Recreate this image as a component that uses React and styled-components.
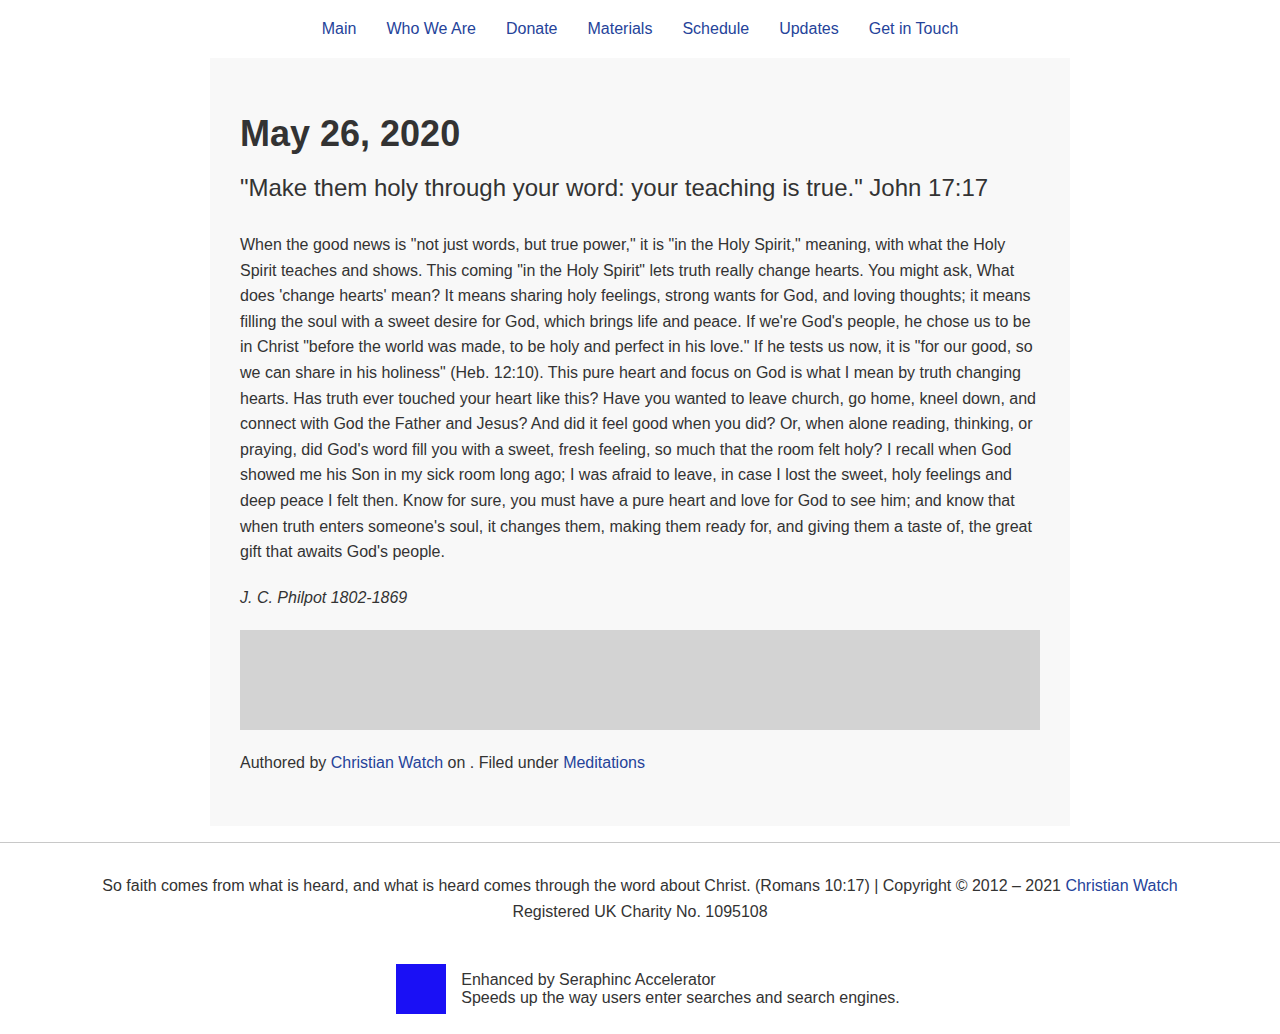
import React from "react"
import styled, { createGlobalStyle } from "styled-components"

const Global = createGlobalStyle`
  body {
    margin: 0;
    background: #fff;
    color: #333;
    font-family: "Liberation Sans", Arial, sans-serif;
    font-size: 16px;
  }
  a {
    color: #25439a;
    text-decoration: none;
  }
`

const Nav = styled.nav`
  display: flex;
  justify-content: center;
  gap: 30px;
  height: 58px;
  align-items: center;
  font-size: 16px;
  a {
    line-height: 20px;
  }
`

const Card = styled.main`
  width: 800px;
  margin: 0 auto;
  padding: 30px;
  background: #f8f8f8;
`

const Title = styled.h1`
  font-size: 36px;
  line-height: 43px;
  font-weight: bold;
  margin: 24px 0 18px;
`

const Verse = styled.h2`
  font-size: 24px;
  line-height: 29px;
  font-weight: normal;
  margin: 0 0 30px;
`

const Para = styled.p`
  line-height: 25.6px;
  margin: 0 0 20px;
  font-style: ${(p) => (p.$italic ? "italic" : "normal")};
`

const Placeholder = styled.div`
  height: 100px;
  background: #d3d3d3;
  margin: 0 0 20px;
`

const Meta = styled.p`
  line-height: 26px;
  margin: 0 0 20px;
`

const Rule = styled.hr`
  border: 0;
  border-top: 1px solid #c8c8c8;
  margin: 16px 0 0;
`

const Footer = styled.footer`
  text-align: center;
  line-height: 26px;
  padding: 30px 0 39px;
`

const Badge = styled.div`
  display: flex;
  justify-content: center;
  align-items: center;
  gap: 15px;
  padding-left: 16px;
`

const Square = styled.div`
  width: 50px;
  height: 50px;
  background: #1a10f5;
`

const BadgeText = styled.div`
  line-height: 18px;
  color: #333;
`

export default function App() {
  return (
    <>
      <Global />
      <Nav>
        <a href="#">Main</a>
        <a href="#">Who We Are</a>
        <a href="#">Donate</a>
        <a href="#">Materials</a>
        <a href="#">Schedule</a>
        <a href="#">Updates</a>
        <a href="#">Get in Touch</a>
      </Nav>
      <Card>
        <Title>May 26, 2020</Title>
        <Verse>"Make them holy through your word: your teaching is true." John 17:17</Verse>
        <Para>
          When the good news is "not just words, but true power," it is "in the Holy Spirit," meaning, with what the Holy Spirit teaches and shows. This coming "in the Holy Spirit" lets truth really change hearts. You might ask, What does 'change hearts' mean? It means sharing holy feelings, strong wants for God, and loving thoughts; it means filling the soul with a sweet desire for God, which brings life and peace. If we're God's people, he chose us to be in Christ "before the world was made, to be holy and perfect in his love." If he tests us now, it is "for our good, so we can share in his holiness" (Heb. 12:10). This pure heart and focus on God is what I mean by truth changing hearts. Has truth ever touched your heart like this? Have you wanted to leave church, go home, kneel down, and connect with God the Father and Jesus? And did it feel good when you did? Or, when alone reading, thinking, or praying, did God's word fill you with a sweet, fresh feeling, so much that the room felt holy? I recall when God showed me his Son in my sick room long ago; I was afraid to leave, in case I lost the sweet, holy feelings and deep peace I felt then. Know for sure, you must have a pure heart and love for God to see him; and know that when truth enters someone's soul, it changes them, making them ready for, and giving them a taste of, the great gift that awaits God's people.
        </Para>
        <Para $italic>J. C. Philpot 1802-1869</Para>
        <Placeholder />
        <Meta>
          Authored by <a href="#">Christian Watch</a> on . Filed under <a href="#">Meditations</a>
        </Meta>
      </Card>
      <Rule />
      <Footer>
        So faith comes from what is heard, and what is heard comes through the word about Christ. (Romans 10:17) | Copyright © 2012 – 2021 <a href="#">Christian Watch</a>
        <br />
        Registered UK Charity No. 1095108
      </Footer>
      <Badge>
        <Square />
        <BadgeText>
          Enhanced by Seraphinc Accelerator
          <br />
          Speeds up the way users enter searches and search engines.
        </BadgeText>
      </Badge>
    </>
  )
}
